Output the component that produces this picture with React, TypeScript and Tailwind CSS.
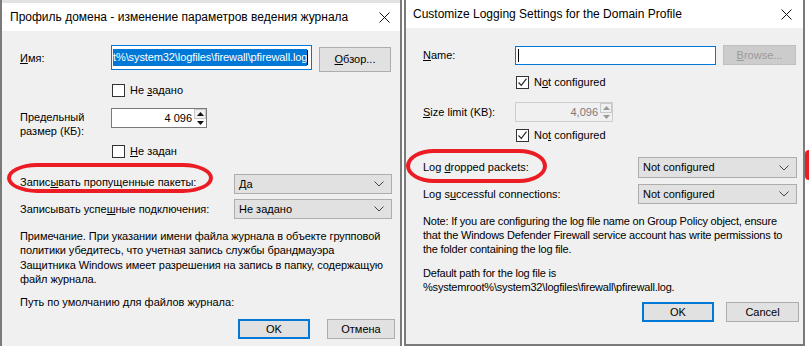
import React from "react";

function CloseIcon() {
  return (
    <svg width="11" height="11" viewBox="0 0 11 11" fill="none">
      <path d="M0.5 0.5l10 10M10.5 0.5l-10 10" stroke="#111" strokeWidth="1" />
    </svg>
  );
}

function Chevron() {
  return (
    <svg width="10" height="6" viewBox="0 0 10 6" fill="none">
      <path d="M0.5 0.5l4.5 4.5 4.5-4.5" stroke="#444" strokeWidth="1" />
    </svg>
  );
}

function Box({ checked }: { checked?: boolean }) {
  return (
    <span className="w-[13px] h-[13px] shrink-0 border border-[#333] bg-white flex items-center justify-center">
      {checked && (
        <svg width="11" height="11" viewBox="0 0 11 11" fill="none">
          <path d="M1.5 5.5l2.8 2.8 5.2-6.6" stroke="#222" strokeWidth="1.1" />
        </svg>
      )}
    </span>
  );
}

function SpinArrows({ muted }: { muted?: boolean }) {
  const c = muted ? "#9a9a9a" : "#111";
  return (
    <div className="w-[12px] flex flex-col h-full">
      <div className="flex-1 flex items-center justify-center bg-[#f0f0f0] border border-[#c8c8c8]">
        <svg width="7" height="4" viewBox="0 0 7 4"><path d="M0 4L3.5 0 7 4z" fill={c} /></svg>
      </div>
      <div className="flex-1 flex items-center justify-center">
        <svg width="7" height="4" viewBox="0 0 7 4"><path d="M0 0L3.5 4 7 0z" fill={c} /></svg>
      </div>
    </div>
  );
}

function Select({ value, w, h }: { value: string; w: string; h: string }) {
  return (
    <div className={`${w} ${h} bg-[#e1e1e1] border border-[#adadad] flex items-center justify-between pl-[4px] pr-[7px]`}>
      <span>{value}</span>
      <Chevron />
    </div>
  );
}

export default function App() {
  return (
    <div className="relative w-[811px] h-[346px] bg-white flex text-[11px] text-black font-['Liberation_Sans',Arial,sans-serif] leading-none overflow-hidden">
      {/* left dialog */}
      <div className="w-[402px] h-full flex flex-col border-x-2 border-[#7a7a7a]">
        <div className="h-[3px] bg-[#e2e2e2]" />
        <div className="h-[28px] bg-white flex items-center justify-between pl-[8px] pr-[10px]">
          <span className="text-[12px]">Профиль домена - изменение параметров ведения журнала</span>
          <CloseIcon />
        </div>
        <div className="flex-1 bg-[#f0f0f0] pl-[18px] flex flex-col">
          <div className="mt-[14px] h-[27px] flex">
            <span className="w-[91px] self-center"><u>И</u>мя:</span>
            <div className="w-[201px] h-[25px] self-start bg-white border border-[#0078d7] flex items-center pl-[1px] overflow-hidden whitespace-nowrap">
              <span className="bg-[#0078d7] text-white h-[17px] flex items-center tracking-[-0.1px]">t%\system32\logfiles\firewall\pfirewall.log</span>
              <span className="w-px h-[15px] bg-black shrink-0" />
            </div>
            <div className="ml-[7px] w-[72px] h-[25px] self-end bg-[#e1e1e1] border border-[#adadad] flex items-center justify-center">
              <span><u>О</u>бзор...</span>
            </div>
          </div>
          <div className="mt-[11px] h-[15px] flex items-center pl-[92px] gap-[5px]">
            <Box />
            <span>Не <u>з</u>адано</span>
          </div>
          <div className="mt-[10px] h-[30px] flex">
            <span className="w-[91px] pt-[2px] leading-[14px]">Пре<u>д</u>ельный<br />размер (КБ):</span>
            <div className="w-[96px] h-[20px] bg-white border border-[#7a7a7a] flex justify-end">
              <span className="self-center pr-[2px]">4 096</span>
              <SpinArrows />
            </div>
          </div>
          <div className="mt-[6px] h-[15px] flex items-center pl-[92px] gap-[5px]">
            <Box />
            <span><u>Н</u>е задан</span>
          </div>
          <div className="mt-[15px] h-[20px] flex items-start">
            <span className="w-[214px] pt-[3px]">Запис<u>ы</u>вать пропущенные пакеты:</span>
            <Select value="Да" w="w-[158px]" h="h-[20px]" />
          </div>
          <div className="mt-[5px] h-[20px] flex items-center">
            <span className="w-[214px]">Записывать успе<u>ш</u>ные подключения:</span>
            <Select value="Не задано" w="w-[158px]" h="h-[20px]" />
          </div>
          <p className="mt-[10px] leading-[14.3px] whitespace-nowrap tracking-[-0.08px]">
            Примечание. При указании имени файла журнала в объекте групповой<br />
            политики убедитесь, что учетная запись службы брандмауэра<br />
            Защитника Windows имеет разрешения на запись в папку, содержащую<br />
            файл журнала.
          </p>
          <p className="mt-[9px] leading-[14px]">Путь по умолчанию для файлов журнала:</p>
          <div className="mt-[10px] flex pl-[218px] gap-[17px]">
            <div className="w-[72px] h-[20px] bg-[#e1e1e1] border-2 border-[#0078d7] flex items-center justify-center">OK</div>
            <div className="w-[68px] h-[20px] bg-[#e1e1e1] border border-[#adadad] flex items-center justify-center">Отмена</div>
          </div>
        </div>
      </div>

      {/* right dialog */}
      <div className="ml-[2px] w-[401px] h-full flex flex-col border-x-2 border-b-2 border-[#7a7a7a]">
        <div className="h-[28px] bg-white flex items-center justify-between pl-[7px] pr-[11px]">
          <span className="text-[12px]">Customize Logging Settings for the Domain Profile</span>
          <CloseIcon />
        </div>
        <div className="flex-1 bg-[#f0f0f0] pl-[17px] flex flex-col">
          <div className="mt-[17px] h-[20px] flex">
            <span className="w-[92px] self-center"><u>N</u>ame:</span>
            <div className="w-[201px] h-[19px] self-end bg-white border border-[#0078d7] flex items-center pl-[2px]">
              <span className="w-px h-[13px] bg-black" />
            </div>
            <div className="ml-[7px] w-[73px] h-[20px] bg-[#cccccc] border border-[#bfbfbf] text-[#9a9a9a] flex items-center justify-center">
              <span><u>B</u>rowse...</span>
            </div>
          </div>
          <div className="mt-[10px] h-[15px] flex items-center pl-[93px] gap-[5px]">
            <Box checked />
            <span>N<u>o</u>t configured</span>
          </div>
          <div className="mt-[12px] h-[20px] flex items-center">
            <span className="w-[92px]"><u>S</u>ize limit (KB):</span>
            <div className="w-[98px] h-[20px] bg-[#f0f0f0] border border-[#cccccc] text-[#7a7a7a] flex justify-end">
              <span className="self-center pr-[2px]">4,096</span>
              <SpinArrows muted />
            </div>
          </div>
          <div className="mt-[6px] h-[15px] flex items-center pl-[93px] gap-[5px]">
            <Box checked />
            <span>No<u>t</u> configured</span>
          </div>
          <div className="mt-[14px] h-[21px] flex items-center">
            <span className="w-[215px]">Log <u>d</u>ropped packets:</span>
            <Select value="Not configured" w="w-[159px]" h="h-[21px]" />
          </div>
          <div className="mt-[6px] h-[20px] flex items-center">
            <span className="w-[215px]">Log s<u>u</u>ccessful connections:</span>
            <Select value="Not configured" w="w-[159px]" h="h-[20px]" />
          </div>
          <p className="mt-[10px] leading-[14px] whitespace-nowrap tracking-[-0.2px]">
            Note: If you are configuring the log file name on Group Policy object, ensure<br />
            that the Windows Defender Firewall service account has write permissions to<br />
            the folder containing the log file.
          </p>
          <p className="mt-[10px] leading-[14px] whitespace-nowrap tracking-[-0.2px]">
            Default path for the log file is<br />
            %systemroot%\system32\logfiles\firewall\pfirewall.log.
          </p>
          <div className="mt-[8px] flex pl-[219px] gap-[12px]">
            <div className="w-[72px] h-[20px] bg-[#e1e1e1] border-2 border-[#0078d7] flex items-center justify-center">OK</div>
            <div className="w-[73px] h-[20px] bg-[#e1e1e1] border border-[#adadad] flex items-center justify-center">Cancel</div>
          </div>
        </div>
      </div>

      {/* red annotation marks */}
      <div className="absolute left-[7px] top-[163px] w-[206px] h-[30px] border-4 border-[#ec1c24] rounded-[30px/15px]" />
      <div className="absolute left-[406px] top-[149px] w-[141px] h-[34px] border-4 border-[#ec1c24] rounded-[28px/17px]" />
      <div className="absolute left-[805px] top-[150px] w-[4px] h-[30px] bg-[#ec1c24] rounded-l-[4px]" />
    </div>
  );
}
